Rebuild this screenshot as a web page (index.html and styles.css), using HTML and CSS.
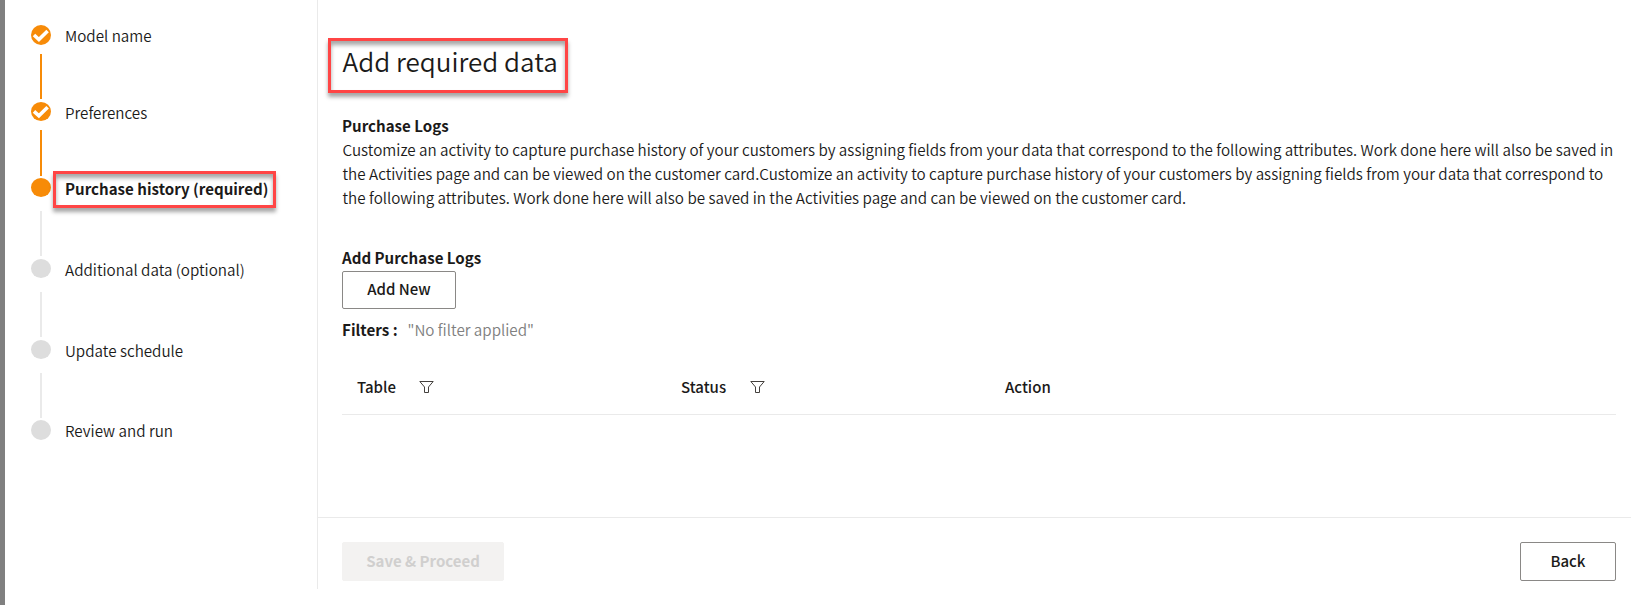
FILE: index.html
```
<!DOCTYPE html>
<html lang="en">
<head>
<meta charset="utf-8">
<title>Add required data</title>
<link rel="stylesheet" href="styles.css">
</head>
<body>
<div class="page">
  <nav class="sidebar">
    <ol class="steps">
      <li class="step done">
        <div class="rail"><span class="dot"><svg viewBox="0 0 20 20"><path d="M3 10L7.9 14.5L16.6 6"/></svg></span><span class="line"></span></div>
        <span class="label">Model name</span>
      </li>
      <li class="step done second">
        <div class="rail"><span class="dot"><svg viewBox="0 0 20 20"><path d="M3 9.3L7.9 13.8L16.6 5.3"/></svg></span><span class="line"></span></div>
        <span class="label">Preferences</span>
      </li>
      <li class="step current">
        <div class="rail"><span class="dot"></span><span class="line"></span></div>
        <span class="label marked">Purchase history (required)</span>
      </li>
      <li class="step todo">
        <div class="rail"><span class="dot"></span><span class="line"></span></div>
        <span class="label">Additional data (optional)</span>
      </li>
      <li class="step todo before-last">
        <div class="rail"><span class="dot"></span><span class="line"></span></div>
        <span class="label">Update schedule</span>
      </li>
      <li class="step todo last">
        <div class="rail"><span class="dot"></span></div>
        <span class="label">Review and run</span>
      </li>
    </ol>
  </nav>
  <main class="main">
    <section class="content">
      <h1 class="title"><span>Add required data</span></h1>
      <h2 class="heading">Purchase Logs</h2>
      <p class="copy">Customize an activity to capture purchase history of your customers by assigning fields from your data that correspond to the following attributes. Work done here will also be saved in<br>the Activities page and can be viewed on the customer card.Customize an activity to capture purchase history of your customers by assigning fields from your data that correspond to<br>the following attributes. Work done here will also be saved in the Activities page and can be viewed on the customer card.</p>
      <h2 class="heading add">Add Purchase Logs</h2>
      <button class="btn add-new"><span>Add New</span></button>
      <div class="filters"><b>Filters :</b><span>"No filter applied"</span></div>
      <div class="table-head">
        <div class="cell"><span class="th-table">Table</span><svg class="funnel" viewBox="0 0 15 14"><path d="M.8 1.5H14.2L9.5 7V12.5H5.5V7Z"/></svg></div>
        <div class="cell"><span class="th-status">Status</span><svg class="funnel" viewBox="0 0 15 14"><path d="M.8 1.5H14.2L9.5 7V12.5H5.5V7Z"/></svg></div>
        <div class="cell"><span class="th-action">Action</span></div>
      </div>
    </section>
    <footer class="footer">
      <button class="btn save" disabled><span>Save &amp; Proceed</span></button>
      <button class="btn back"><span>Back</span></button>
    </footer>
  </main>
</div>
</body>
</html>
```
FILE: styles.css
```
* { box-sizing: border-box; }
body {
  margin: 0;
  background: #fff;
  color: #1b1a19;
  font: 350 15.2px/24px "Noto Sans CJK SC", "Noto Sans", sans-serif;
  overflow: hidden;
}
h1, h2, p, ol { margin: 0; padding: 0; }
.page { display: flex; height: 605px; border-left: 5px solid #808080; }
.sidebar { flex: none; width: 313px; height: 589px; border-right: 1px solid #eaeaea; padding: 25px 0 0 26px; }
.steps { list-style: none; }
.step { display: flex; height: 81px; white-space: nowrap; }
.step.done { height: 77px; }
.step.second { height: 76px; }
.step.before-last { height: 80px; }
.rail { width: 20px; display: flex; flex-direction: column; align-items: center; }
.dot { width: 20px; height: 19px; border-radius: 50%; background: #ddd; }
.done .dot { background: #f78b08; height: 20px; }
.done.second .dot { height: 19px; }
.last .dot { height: 20px; }
.current .dot { background: #f78b08; }
.dot svg { display: block; width: 20px; height: 20px; fill: none; stroke: #fff; stroke-width: 3.6; }
.line { flex: none; width: 2px; height: 45px; margin-top: 14px; background: #eaeaea; }
.done .line { background: #f78b08; margin-top: 9px; }
.second .line { height: 46px; }
.label { margin: -2px 0 0 14px; }
.marked {
  font-weight: 700;
  font-size: 15.1px;
  height: 37px;
  margin: -7px 0 0 2px;
  width: 223px;
  padding: 2px 0 0 9px;
}
.marked, .title {
  border: 3px solid #ff4545;
  box-shadow: 0 4px 4px rgba(0,0,0,.35), inset 0 4px 4px rgba(0,0,0,.35);
}
.main { flex: 1; min-width: 0; display: flex; flex-direction: column; }
.content { height: 517px; padding: 38px 15px 0 24px; }
.title {
  width: 240px;
  height: 55px;
  margin-left: -14px;
  padding: 0 0 0 11.5px;
  font-size: 26px;
  line-height: 40px;
  font-weight: 350;
  white-space: nowrap;
}
.heading { margin-top: 20px; font-size: 15.1px; font-weight: 700; line-height: 24px; }
.copy { padding-left: .5px; white-space: nowrap; }
.heading.add { margin-top: 36px; }
.btn {
  display: block;
  height: 39px;
  padding: 0 0 2px;
  border: 1px solid #8a8886;
  border-radius: 2px;
  background: #fff;
  color: #1b1a19;
  font: inherit;
  font-size: 15px;
  font-weight: 500;
}
.add-new { width: 114px; height: 38px; margin-top: 2px; }
.filters { display: flex; margin-top: 8px; }
.filters b { width: 65.5px; }
.filters span { color: #808080; }
.table-head { display: flex; height: 74px; border-bottom: 1px solid #eaeaea; padding: 34px 0 0 15px; font-size: 15px; font-weight: 500; }
.cell { width: 324px; display: flex; }
.th-table { width: 62px; }
.th-status { width: 69px; }
.funnel { width: 15px; height: 14px; margin-top: 5px; fill: none; stroke: #44403d; stroke-width: 1; }
.footer { flex: 1; display: flex; justify-content: space-between; align-items: flex-start; border-top: 1px solid #eaeaea; padding: 24px 15px 0 24px; }
.save { width: 162px; background: #f3f2f1; border-color: #f3f2f1; color: #d0cfce; font-weight: 700; }
.back { width: 96px; }
```
